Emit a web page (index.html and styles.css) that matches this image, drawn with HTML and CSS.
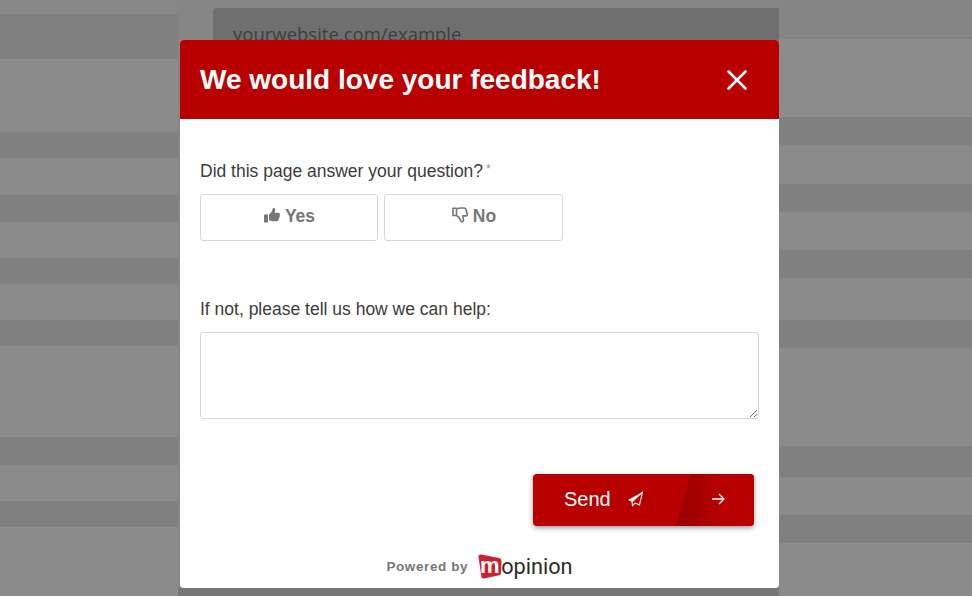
FILE: index.html
```html
<!DOCTYPE html>
<html lang="en">
<head>
    <meta charset="UTF-8">
    <title>Feedback</title>
    <link rel="stylesheet" href="styles.css">
</head>
<body>
    <div class="page">
        <div class="side side-left"></div>
        <div class="middle">
            <div class="url-box">yourwebsite.com/example</div>
        </div>
        <div class="side side-right"></div>
    </div>

    <div class="modal">
        <div class="modal-header">
            <h1>We would love your feedback!</h1>
            <svg class="close" width="22" height="22" viewBox="0 0 22 22">
                <path d="M2.500 2.500 L19.500 19.500 M19.500 2.500 L2.500 19.500" stroke="#fff" stroke-width="2.500" stroke-linecap="round" fill="none"/>
            </svg>
        </div>
        <div class="modal-body">
            <div class="label">Did this page answer your question?<span class="req">*</span></div>
            <div class="choices">
                <button class="choice">
                    <svg width="16" height="16" viewBox="0 0 16 16"><path d="M0 6.500h4v8H0zM5 6.500C6.500 5.500 8 3.500 8.500 1.500 8.700.5 9 0 9.700 0c1.300 0 1.800 1.300 1.500 2.800l-.4 2h3.500c1 0 1.700.7 1.700 1.600 0 .5-.2.900-.5 1.200.3.300.4.700.3 1.100-.1.500-.4.800-.8 1 .2.400.2.800 0 1.200-.2.400-.5.600-.9.700.1.400.1.800-.2 1.100-.3.400-.8.600-1.500.6H9.500c-1.700 0-3-.4-4.500-1z" fill="#777"/></svg>
                    Yes
                </button>
                <button class="choice">
                    <svg width="16" height="17" viewBox="0 0 16 17"><path d="M1 1.200h3.500v7.300H1zM4.500 2c1.500-.6 2.800-1 4.300-1h3.300c1.200 0 1.900.7 1.700 1.700.6.400.8 1.100.5 1.800.6.400.8 1.100.5 1.800.6.500.7 1.100.5 1.700-.2.600-.8.900-1.500.9h-3l.5 2.700c.4 1.800-.1 3.300-1.400 3.300-.8 0-1.100-.6-1.300-1.500C7.500 10.700 6.200 9.300 4.500 8.500z" fill="none" stroke="#777" stroke-width="1.600" stroke-linejoin="round"/></svg>
                    No
                </button>
            </div>
            <div class="label label-second">If not, please tell us how we can help:</div>
            <textarea class="answer"></textarea>
            <div class="actions">
                <button class="send">
                    <span class="send-main">
                        Send
                        <svg width="16" height="16" viewBox="0 0 16 16"><path d="M15.500 1 L1 9 L5 10.800 Z" fill="#fff"/><path d="M15.500 1 L5 10.800 L5.500 15 L8 12 L12.500 14 Z" fill="none" stroke="#fff" stroke-width="1.100" stroke-linejoin="round"/></svg>
                    </span>
                    <span class="send-arrow">
                        <svg width="14" height="14" viewBox="0 0 14 14"><path d="M1 7 H13 M8 2 L13 7 L8 12" fill="none" stroke="#fff" stroke-width="1.300"/></svg>
                    </span>
                </button>
            </div>
            <div class="powered">
                <span class="powered-text">Powered by</span>
                <span class="logo">
                    <svg class="logo-badge" width="24" height="25" viewBox="0 0 24 25"><path d="M3 .5 L21 4 Q23.500 4.500 23.500 7 L23 19 Q23 21 21 21.300 L6 24.500 Q4 24.800 3.500 23 L.5 3 Q.2 .2 3 .5 Z" fill="#cf1f2e"/></svg>
                    <span class="logo-m">m</span><span class="logo-text">opinion</span>
                </span>
            </div>
        </div>
    </div>
</body>
</html>
```

FILE: styles.css
```css
* {
    margin: 0;
    padding: 0;
    box-sizing: border-box;
}

html, body {
    height: 596px;
    overflow: hidden;
}

body {
    font-family: "Liberation Sans", Arial, sans-serif;
    background-color: #8a8a8a;
}

.page {
    display: flex;
    height: 596px;
}

.side {
    width: 178px;
    flex: none;
}

.side-left {
    background: linear-gradient(to bottom,
        #878787 0 14px, #808080 14px 59px, #8b8b8b 59px 132px, #808080 132px 158px,
        #8b8b8b 158px 195px, #808080 195px 222px, #8b8b8b 222px 258px, #808080 258px 284px,
        #8b8b8b 284px 320px, #808080 320px 346px, #8b8b8b 346px 437px, #808080 437px 465px,
        #8b8b8b 465px 501px, #808080 501px 527px, #8b8b8b 527px 596px);
}

.side-right {
    flex: 1;
    background: linear-gradient(to bottom,
        #858585 0 39px, #8c8c8c 39px 117px, #808080 117px 145px, #8b8b8b 145px 184px,
        #808080 184px 212px, #8b8b8b 212px 250px, #808080 250px 278px, #8b8b8b 278px 320px,
        #808080 320px 348px, #8b8b8b 348px 446px, #808080 446px 477px, #8b8b8b 477px 515px,
        #808080 515px 543px, #8b8b8b 543px 596px);
}

.middle {
    width: 601px;
    flex: none;
    padding: 8px 0 0 35px;
    background: linear-gradient(to bottom, #868686 0 588px, #777 588px 596px);
}

.url-box {
    height: 60px;
    padding: 13px 20px;
    border-radius: 4px 0 0 0;
    background-color: #6f6f6f;
    color: #3e3e3e;
    font-family: "Open Sans", sans-serif;
    font-size: 18.500px;
}

.modal {
    position: absolute;
    left: 180px;
    top: 40px;
    width: 599px;
    height: 548px;
    border-radius: 4px;
    background-color: #fff;
    overflow: hidden;
}

.modal-header {
    display: flex;
    align-items: center;
    justify-content: space-between;
    height: 79px;
    padding: 0 31px 0 20px;
    background-color: #b90000;
}

.modal-header h1 {
    font-size: 28px;
    font-weight: 700;
    color: #fff;
}

.modal-body {
    padding: 39px 20px 0;
}

.label {
    font-size: 17.500px;
    line-height: 22px;
    color: #3c3c3c;
}

.req {
    margin-left: 3px;
    font-size: 12px;
    vertical-align: 4px;
    color: #999;
}

.choices {
    display: flex;
    gap: 6px;
    margin-top: 12px;
}

.choice {
    display: flex;
    align-items: center;
    justify-content: center;
    gap: 5px;
    width: 178px;
    height: 47px;
    padding: 0 0 2px 1px;
    background-color: #fff;
    border: 1px solid #d9d9d9;
    border-radius: 3px;
    font-family: inherit;
    font-size: 17.500px;
    font-weight: 700;
    color: #777;
}

.choice svg {
    margin-top: -2px;
}

.choice + .choice {
    width: 179px;
}

.label-second {
    margin-top: 57px;
}

.answer {
    display: block;
    width: 559px;
    height: 87px;
    margin-top: 12px;
    border: 1px solid #d9d9d9;
    border-radius: 3px;
    background-color: #fff;
}

.actions {
    display: flex;
    justify-content: flex-end;
    margin-top: 55px;
    padding-right: 5px;
}

.send {
    position: relative;
    display: flex;
    width: 221px;
    height: 52px;
    border: none;
    border-radius: 4px;
    overflow: hidden;
    background-color: #b90000;
    box-shadow: 0 2px 5px rgba(0, 0, 0, 0.4);
    color: #fff;
    font-family: inherit;
    font-size: 20px;
}

.send-main {
    display: flex;
    align-items: center;
    gap: 16px;
    width: 143px;
    padding: 0 0 2px 31px;
}

.send-arrow {
    display: flex;
    align-items: center;
    justify-content: center;
    flex: 1;
    padding: 0 0 2px 6px;
    clip-path: polygon(15px 0, 100% 0, 100% 100%, 0 100%);
    background: linear-gradient(to right, #960000, #b90000 60%);
}

.powered {
    display: flex;
    align-items: center;
    justify-content: center;
    gap: 10px;
    margin-top: 28px;
}

.powered-text {
    font-size: 13.500px;
    font-weight: 700;
    letter-spacing: 0.6px;
    color: #777;
}

.logo {
    position: relative;
    display: flex;
    align-items: center;
    height: 25px;
}

.logo-badge {
    position: absolute;
    left: 0;
    top: 0;
}

.logo-m {
    position: relative;
    width: 23px;
    margin-top: -2px;
    text-align: center;
    font-size: 22px;
    font-weight: 700;
    line-height: 25px;
    color: #fff;
}

.logo-text {
    font-family: Roboto, sans-serif;
    font-size: 21.700px;
    line-height: 25px;
    color: #2b2b2b;
}
```
